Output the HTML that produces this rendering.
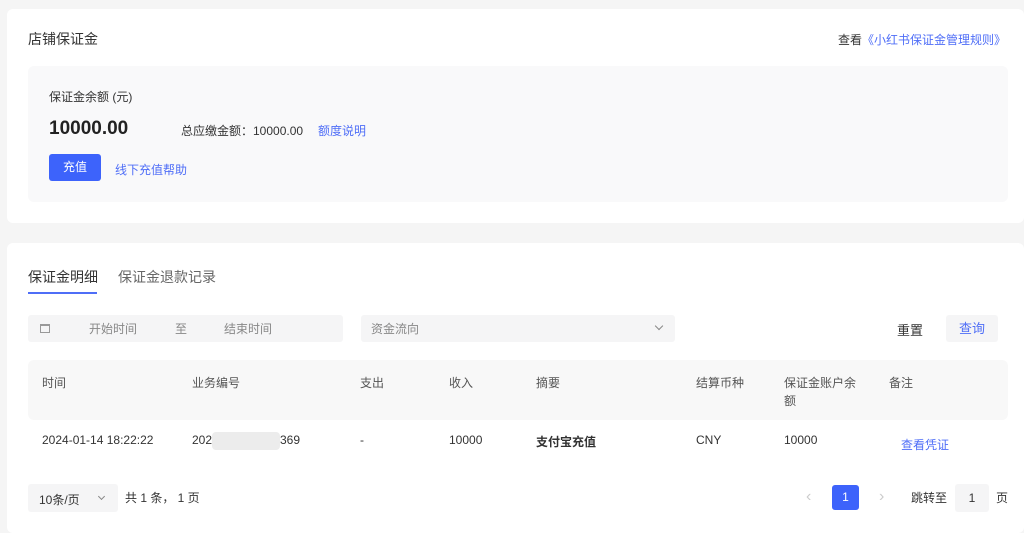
<!DOCTYPE html>
<html><head><meta charset="utf-8"><style>
*{margin:0;padding:0;box-sizing:border-box}
body{width:1024px;height:522px;background:#f5f5f5;font-family:"Liberation Sans","Noto Sans CJK SC",sans-serif;color:#333;font-size:12px;position:relative;overflow:hidden}
.a{position:absolute;white-space:nowrap}
.blue{color:#4f6ef7}
</style></head><body>
<div class="a" style="left:7px;top:9px;width:1017px;height:214px;background:#fff;border-radius:6px"></div>
<div class="a" style="left:28px;top:29px;font-size:14px;color:#333">店铺保证金</div>
<div class="a" style="left:838px;top:31px;font-size:12px;color:#333">查看<span class="blue">《小红书保证金管理规则》</span></div>
<div class="a" style="left:28px;top:66px;width:980px;height:136px;background:#f9f9fa;border-radius:6px"></div>
<div class="a" style="left:49px;top:88px;font-size:12px;color:#333">保证金余额 (元)</div>
<div class="a" style="left:49px;top:118px;font-size:19px;font-weight:bold;color:#222">10000.00</div>
<div class="a" style="left:181px;top:122px;font-size:12px;color:#333">总应缴金额：10000.00</div>
<div class="a blue" style="left:318px;top:122px">额度说明</div>
<div class="a" style="left:49px;top:154px;width:52px;height:27px;background:#3d63fb;border-radius:3px;color:#fff;text-align:center;line-height:27px">充值</div>
<div class="a blue" style="left:115px;top:161px">线下充值帮助</div>

<div class="a" style="left:7px;top:243px;width:1017px;height:290px;background:#fff;border-radius:6px"></div>
<div class="a" style="left:28px;top:267px;font-size:14px;color:#333">保证金明细</div>
<div class="a" style="left:28px;top:292px;width:69px;height:2px;background:#4f6ef7"></div>
<div class="a" style="left:118px;top:267px;font-size:14px;color:#666">保证金退款记录</div>

<div class="a" style="left:28px;top:315px;width:315px;height:27px;background:#f5f5f6;border-radius:3px"></div>
<div class="a" style="left:40px;top:324px;width:10px;height:9px;border:1px solid #999;border-top-width:2px"></div>
<div class="a" style="left:89px;top:320px;color:#888">开始时间</div>
<div class="a" style="left:175px;top:320px;color:#888">至</div>
<div class="a" style="left:224px;top:320px;color:#888">结束时间</div>
<div class="a" style="left:361px;top:315px;width:314px;height:27px;background:#f5f5f6;border-radius:3px"></div>
<div class="a" style="left:371px;top:320px;color:#888">资金流向</div>
<div class="a" style="left:656px;top:323px;width:6px;height:6px;border-right:1px solid #888;border-bottom:1px solid #888;transform:rotate(45deg)"></div>
<div class="a" style="left:897px;top:320px;color:#333;font-size:13px">重置</div>
<div class="a" style="left:946px;top:315px;width:52px;height:27px;background:#f5f5f6;border-radius:3px;text-align:center;line-height:27px;color:#4f6ef7;font-size:13px">查询</div>

<div class="a" style="left:28px;top:360px;width:980px;height:60px;background:#f8f8f8;border-radius:6px"></div>
<div class="a" style="left:42px;top:374px;color:#555">时间</div>
<div class="a" style="left:192px;top:374px;color:#555">业务编号</div>
<div class="a" style="left:360px;top:374px;color:#555">支出</div>
<div class="a" style="left:449px;top:374px;color:#555">收入</div>
<div class="a" style="left:536px;top:374px;color:#555">摘要</div>
<div class="a" style="left:696px;top:374px;color:#555">结算币种</div>
<div class="a" style="left:784px;top:374px;color:#555;line-height:18px">保证金账户余<br>额</div>
<div class="a" style="left:889px;top:374px;color:#555">备注</div>

<div class="a" style="left:42px;top:433px;color:#333">2024-01-14 18:22:22</div>
<div class="a" style="left:192px;top:433px;color:#333">202</div>
<div class="a" style="left:212px;top:432px;width:68px;height:18px;background:#ececec;border-radius:4px"></div>
<div class="a" style="left:280px;top:433px;color:#333">369</div>
<div class="a" style="left:360px;top:433px;color:#333">-</div>
<div class="a" style="left:449px;top:433px;color:#333">10000</div>
<div class="a" style="left:536px;top:433px;color:#333;font-weight:bold">支付宝充值</div>
<div class="a" style="left:696px;top:433px;color:#333">CNY</div>
<div class="a" style="left:784px;top:433px;color:#333">10000</div>
<div class="a blue" style="left:901px;top:436px">查看凭证</div>

<div class="a" style="left:28px;top:484px;width:90px;height:28px;background:#f5f5f6;border-radius:3px"></div>
<div class="a" style="left:39px;top:491px;color:#333">10条/页</div>
<div class="a" style="left:99px;top:494px;width:5px;height:5px;border-right:1px solid #888;border-bottom:1px solid #888;transform:rotate(45deg)"></div>
<div class="a" style="left:125px;top:489px;color:#333">共 1 条， 1 页</div>
<div class="a" style="left:806px;top:488px;color:#ccc;font-size:16px">&lsaquo;</div>
<div class="a" style="left:832px;top:485px;width:27px;height:25px;background:#3d63fb;border-radius:3px;color:#fff;text-align:center;line-height:25px">1</div>
<div class="a" style="left:879px;top:488px;color:#ccc;font-size:16px">&rsaquo;</div>
<div class="a" style="left:911px;top:489px;color:#333">跳转至</div>
<div class="a" style="left:955px;top:484px;width:34px;height:28px;background:#f5f5f6;border-radius:3px;text-align:center;line-height:28px">1</div>
<div class="a" style="left:996px;top:489px;color:#333">页</div>
</body></html>
